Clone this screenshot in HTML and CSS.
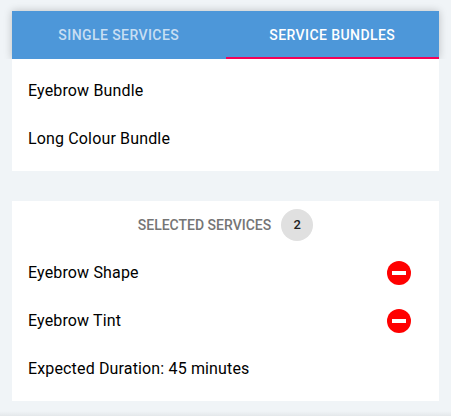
FILE: index.html
```
<!DOCTYPE html>
<html lang="en">
<head>
  <meta charset="UTF-8">
  <title>Services</title>
  <link rel="stylesheet" href="styles.css">
</head>
<body>
<div class="card">
  <ul class="tabs">
    <li>Single Services</li>
    <li class="active">Service Bundles</li>
  </ul>
  <ul class="list">
    <li>Eyebrow Bundle</li>
    <li>Long Colour Bundle</li>
  </ul>
</div>
<div class="card selected">
  <div class="subheader">Selected Services <span class="count">2</span></div>
  <ul class="list">
    <li>Eyebrow Shape
      <svg class="remove" viewBox="0 0 24 24"><circle cx="12" cy="12" r="12"/><path d="M5 10h14v4H5z"/></svg>
    </li>
    <li>Eyebrow Tint
      <svg class="remove" viewBox="0 0 24 24"><circle cx="12" cy="12" r="12"/><path d="M5 10h14v4H5z"/></svg>
    </li>
    <li>Expected Duration: 45 minutes</li>
  </ul>
</div>
<div class="bottom-shade"></div>
</body>
</html>
```
FILE: styles.css
```
body,div,ul,li{margin:0;padding:0;}
ul{list-style-type:none;}
body{background:#f0f4f7;padding:11px 12px 0;font:16px/24px Roboto,sans-serif;color:#000;}
.card{background:#fff;}
.tabs{display:flex;height:48px;background:#4d97d9;box-shadow:0 0 8px rgba(0,0,0,.22);clip-path:inset(-11px -12px 0);}
.tabs li{box-sizing:border-box;width:50%;height:48px;line-height:48px;text-align:center;font-size:14px;font-weight:500;text-transform:uppercase;color:rgba(255,255,255,.7);letter-spacing:.42px;}
.tabs li.active{color:#fff;border-bottom:2px solid #f50057;}
.list{padding:8px 0;}
.list li{display:flex;align-items:center;justify-content:space-between;height:48px;padding:0 28px 0 16px;letter-spacing:.15px;}
.selected{margin-top:30px;}
.subheader{display:flex;align-items:center;justify-content:center;height:48px;font-size:14px;font-weight:500;text-transform:uppercase;color:#757575;}
.count{width:32px;height:32px;margin-left:10px;border-radius:50%;background:#e0e0e0;color:#212121;font-size:13px;line-height:32px;text-align:center;}
.selected .list{padding:0 0 8px;}
.remove{width:24px;height:24px;}
.remove circle{fill:#f00;}
.remove path{fill:#fff;}
.bottom-shade{height:5px;margin:10px -12px 0;background:linear-gradient(rgba(0,0,0,0),rgba(0,0,0,.05));}
```
